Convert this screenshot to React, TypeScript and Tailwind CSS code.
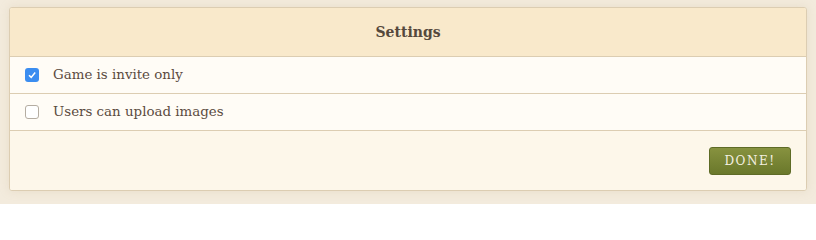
import React from "react";

export default function App() {
  const font = { fontFamily: '"DejaVu Serif", "Liberation Serif", serif' };
  return (
    <div className="w-[816px] h-[204px] bg-[#f3ebdd] pt-[7px] pl-[9px]" style={font}>
      <div className="w-[798px] rounded-[3px] border border-[#dccdb2] bg-[#fdf7ea] shadow-[0_0_10px_rgba(200,180,140,0.25)] overflow-hidden">
        <div className="h-[49px] flex items-center justify-center bg-[#f9e9cb] border-b border-[#dccdb2]">
          <span className="text-[14px] font-bold text-[#55483c]">Settings</span>
        </div>
        <label className="h-[37px] flex items-center bg-[#fffcf6] border-b border-[#dccdb2] pl-[15px]">
          <span className="w-[14px] h-[14px] rounded-[3px] bg-[#3b8df0] flex items-center justify-center">
            <svg width="10" height="10" viewBox="0 0 10 10">
              <path d="M2 5.2 L4.2 7.4 L8.2 2.6" fill="none" stroke="#fff" strokeWidth="1.5" />
            </svg>
          </span>
          <span className="ml-[14px] text-[13.4px] text-[#5b4b3f] pt-[1px]">Game is invite only</span>
        </label>
        <label className="h-[37px] flex items-center bg-[#fffcf6] border-b border-[#dccdb2] pl-[15px]">
          <span className="w-[14px] h-[14px] rounded-[3px] bg-white border border-[#b5ada2]" />
          <span className="ml-[14px] text-[13.4px] text-[#5b4b3f] pt-[1px]">Users can upload images</span>
        </label>
        <div className="h-[59px] flex items-center justify-end pr-[15px] bg-[#fdf7ea]">
          <button className="w-[82px] h-[28px] rounded-[3px] border border-[#5e6b26] bg-gradient-to-b from-[#87923f] to-[#6a782b] text-[#f4f0e2] text-[12px] tracking-[1.5px] mt-[1px]">
            DONE!
          </button>
        </div>
      </div>
    </div>
  );
}
